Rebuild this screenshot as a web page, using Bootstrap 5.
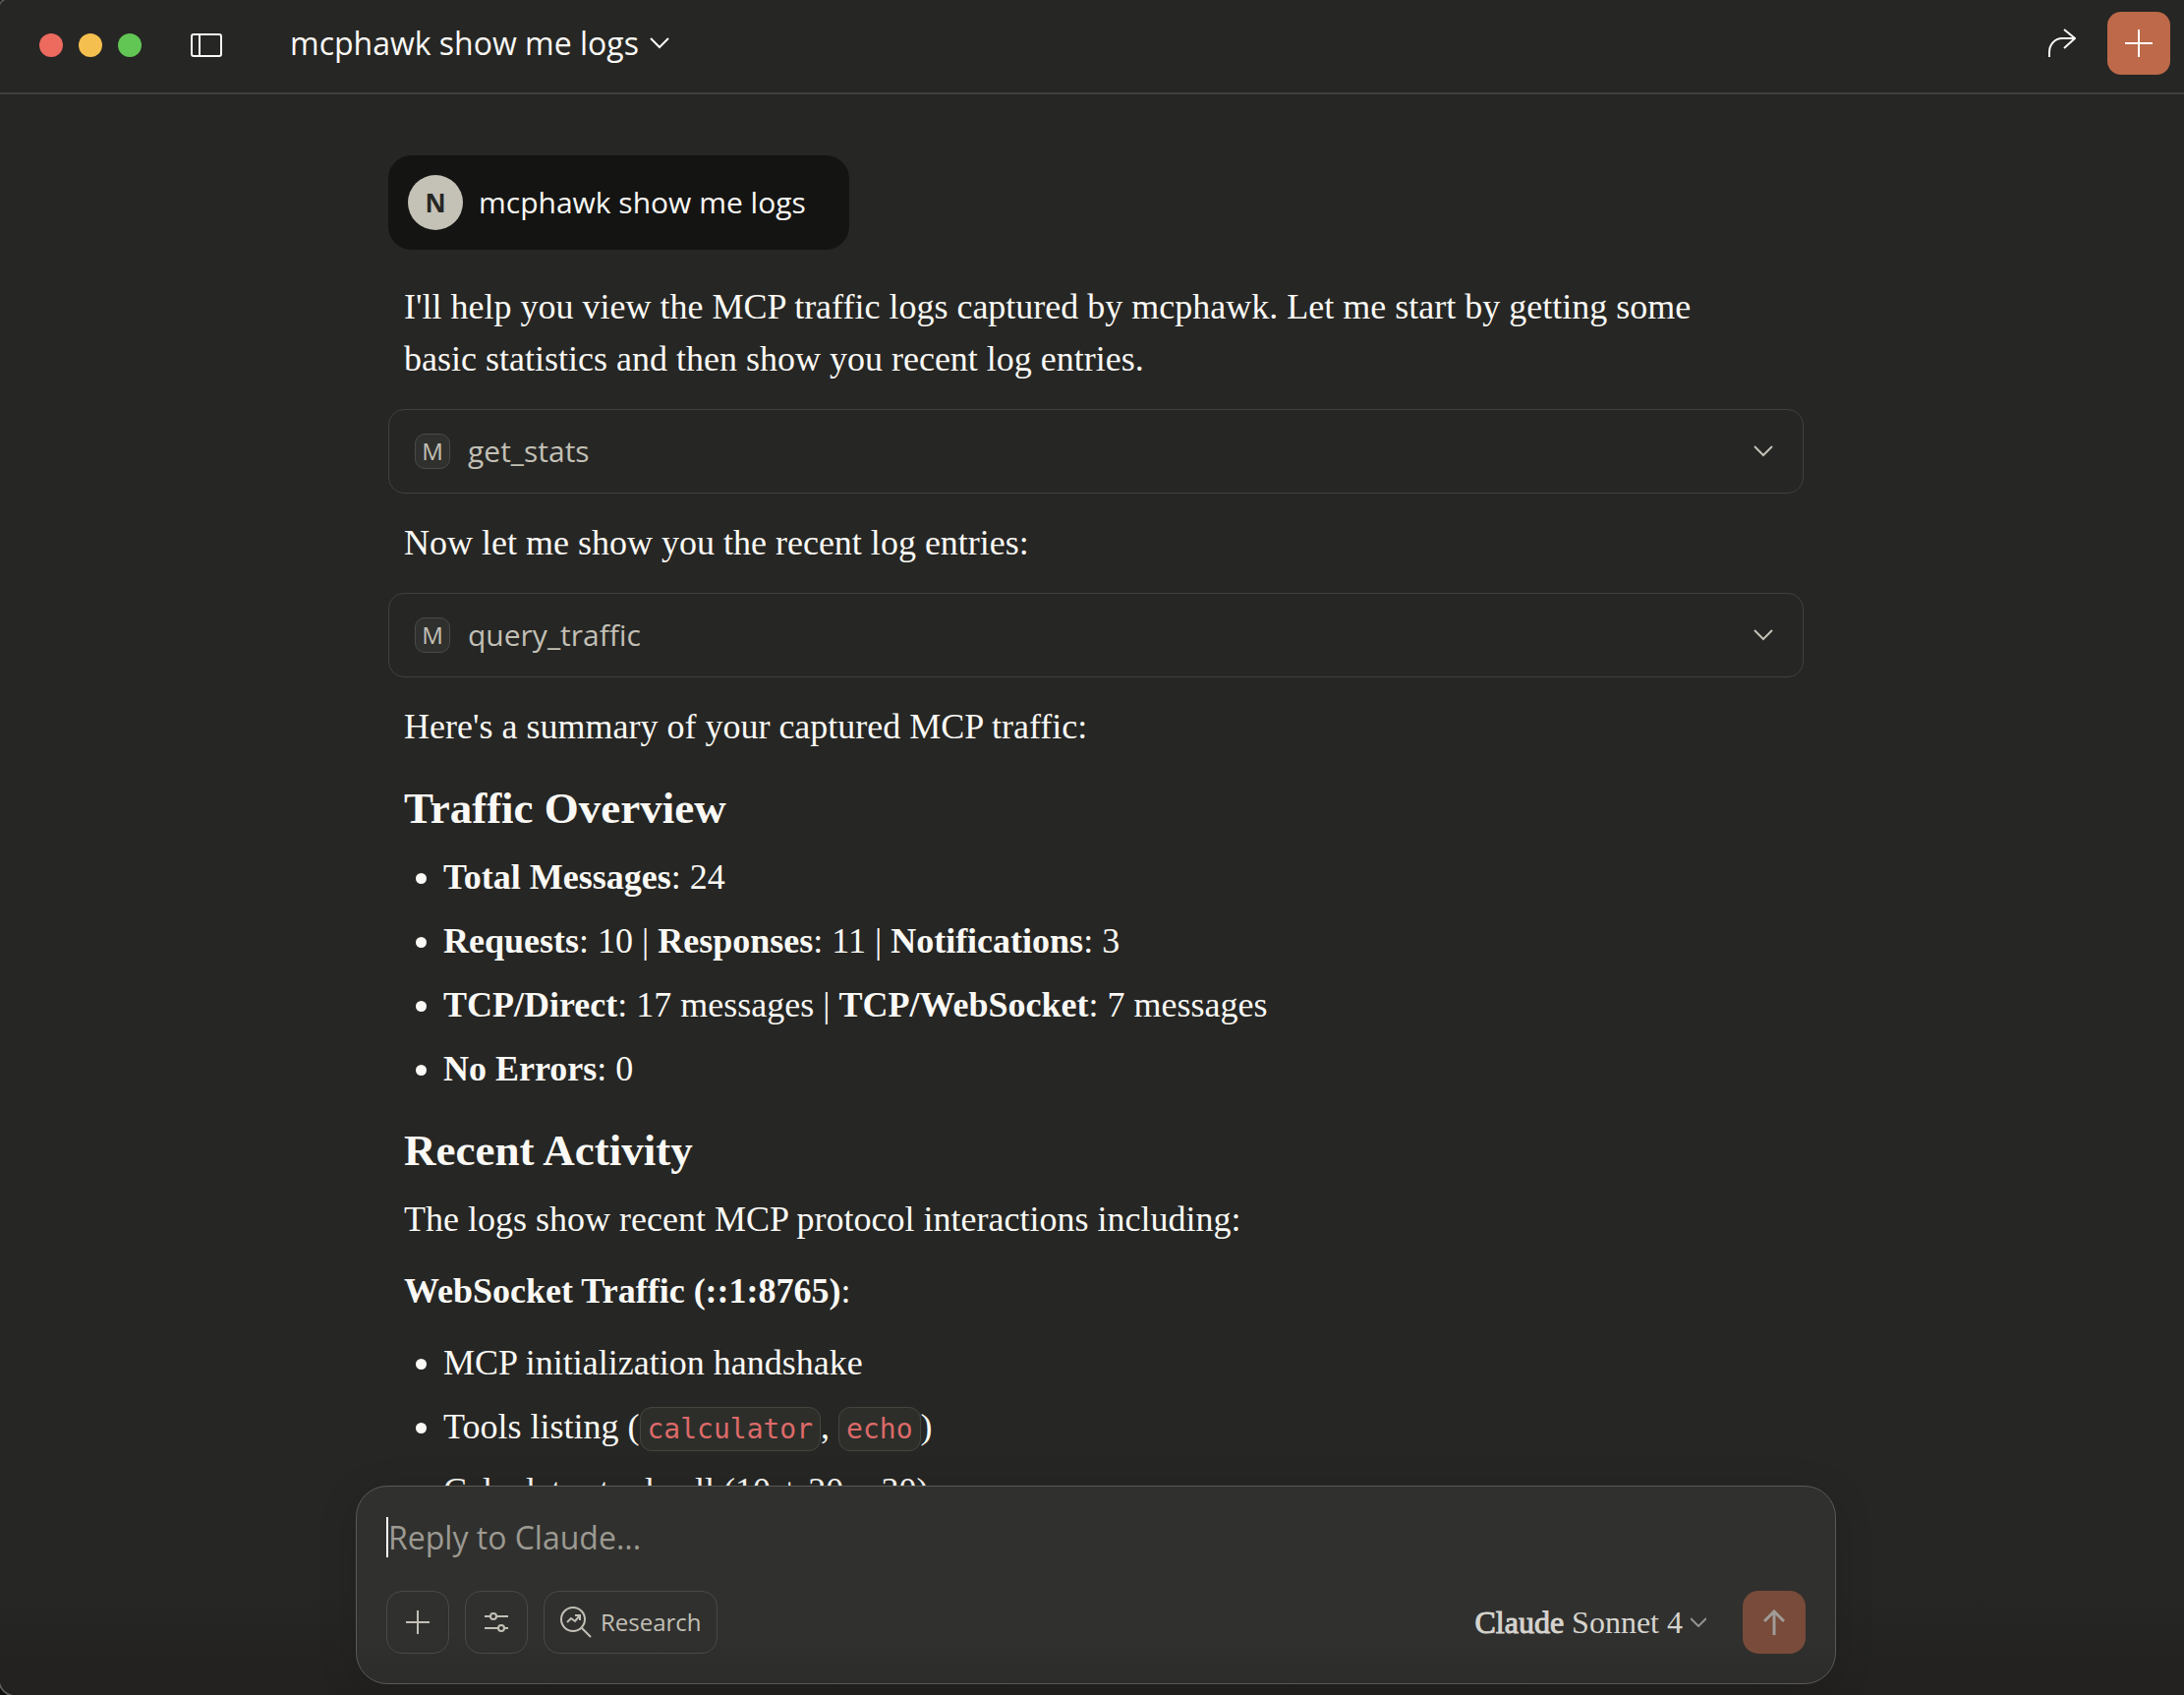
<!DOCTYPE html>
<html lang="en">
<head>
<meta charset="utf-8">
<meta name="viewport" content="width=device-width, initial-scale=1">
<title>mcphawk show me logs</title>
<link href="https://cdn.jsdelivr.net/npm/bootstrap@5.3.0/dist/css/bootstrap.min.css" rel="stylesheet">
<style>
  :root {
    --ink: #faf9f5;
    --ink-soft: #c2c0b6;
    --ink-dim: #9c9a92;
    --line: #40403d;
    --sans: "Open Sans", "Noto Sans", sans-serif;
    --serif: "Liberation Serif", serif;
  }
  body { background: #0d0f0d; color: var(--ink); font-family: var(--sans); }
  svg { display: block; fill: none; stroke: currentColor; stroke-width: 2; }
  .app-window {
    background: linear-gradient(#262624 94%, #222120);
    border-radius: 8px 0 0 16px;
    box-shadow: 0 0 0 2px #5a5a58;
  }
  .title-bar { border-bottom: 2px solid #40403e; padding: 12px 14px 18px 40px; }
  .window-controls { padding-top: 4px; gap: 16px; }
  .light { width: 24px; height: 24px; border-radius: 50%; }
  .light-close { background: #ed6a5f; }
  .light-min { background: #f5bf4f; }
  .light-max { background: #62c655; }
  .sidebar-toggle { margin-left: 34px; color: var(--ink-soft); }
  .plain-btn { background: none; border: 0; padding: 0; color: inherit; }
  .chat-title { margin-left: 69px; font-size: 32px; line-height: 44px; gap: 11px; }
  .square-btn { width: 64px; height: 64px; border: 0; border-radius: 14px; padding: 0; color: #fff; }
  .new-btn { background: #bd694a; }
  .send-btn { background: #784b3a; color: #a09c97; border-radius: 16px; }
  .send-btn svg { stroke-width: 3; }

  .thread { min-height: 0; padding: 62px 0 0 8px; }
  .thread-column { max-width: 1440px; }
  .user-bubble { background: #141413; border-radius: 24px; padding: 20px 44px 20px 20px; gap: 16px; font-size: 30px; line-height: 56px; }
  .avatar { width: 56px; height: 56px; background: #c4c1b7; color: #262624; font-size: 26px; font-weight: 700; }
  .reply { font-family: var(--serif); font-size: 36px; line-height: 53px; padding-top: 32px; }
  .reply p, .reply ul, .reply h3 { margin: 0 16px; }
  .reply h3 { font-size: 45px; line-height: 56px; font-weight: 700; margin-top: 28px; margin-bottom: 16px; }
  .reply p + p, .reply p + ul { margin-top: 20px; }
  .reply ul { padding-left: 40px; }
  .reply li + li { margin-top: 12px; }
  .reply code {
    font: 28px/42px "DejaVu Sans Mono", monospace; color: #dd6a69; background: #2d2e2a;
    border: 1px solid #45453f; border-radius: 12px; padding: 5px 7px;
  }
  .tool-call {
    border: 1px solid var(--line); border-radius: 16px; height: 86px; padding: 0 30px 0 26px;
    margin: 24px 0; gap: 18px; font-family: var(--sans); font-size: 30px; line-height: 40px; color: var(--ink-soft);
  }
  .tool-badge { width: 36px; height: 36px; border: 1px solid #4a4a47; border-radius: 10px; background: #30302e; font-size: 24px; line-height: 34px; }

  .composer-dock { padding: 0 0 11px 8px; }
  .composer {
    max-width: 1506px; background: linear-gradient(#30302e 75%, #2c2c2a); border: 1px solid #5a5955; border-radius: 32px;
    padding: 31px 30px 30px; box-shadow: 0 8px 40px rgba(0, 0, 0, .14);
  }
  .reply-box {
    background: none; border: 0; border-left: 2px solid #fff; border-radius: 0; outline: 0; padding: 0; height: 41px;
    font-size: 32px; line-height: 41px; color: var(--ink);
  }
  .reply-box::placeholder { color: var(--ink-dim); opacity: 1; }
  .composer-tools { margin-top: 34px; gap: 16px; }
  .tool-btn { height: 64px; min-width: 64px; background: none; border: 1px solid #494946; border-radius: 16px; padding: 0; color: var(--ink-soft); font-size: 24px; }
  .research-btn { padding: 0 15px; gap: 8px; }
  .model-btn { font-family: var(--serif); font-size: 32px; gap: 8px; color: #d6d4ce; margin-right: 21px; }
  .model-brand { -webkit-text-stroke: 1px currentColor; }
</style>
</head>
<body>
<div class="app-window vh-100 d-flex flex-column overflow-hidden">
  <header class="title-bar d-flex align-items-center flex-shrink-0">
    <div class="window-controls d-flex align-items-center">
      <span class="light light-close"></span>
      <span class="light light-min"></span>
      <span class="light light-max"></span>
      <button class="plain-btn sidebar-toggle" type="button" aria-label="Toggle sidebar">
        <svg width="32" height="24" viewBox="0 0 32 24"><rect x="1" y="1" width="30" height="22" rx="2"/><path d="M9 1v22"/></svg>
      </button>
    </div>
    <button class="plain-btn chat-title d-flex align-items-center" type="button">
      mcphawk show me logs
      <svg width="20" height="12" viewBox="0 0 20 12"><path d="M1 1l9 9 9-9"/></svg>
    </button>
    <button class="plain-btn ms-auto me-4 pe-2" type="button" aria-label="Share">
      <svg width="30" height="30" viewBox="0 0 30 30"><path d="M3 29v-5C3 17 8 10 16 10h13M18 1l11 9-11 10"/></svg>
    </button>
    <button class="square-btn new-btn d-flex align-items-center justify-content-center" type="button" aria-label="New chat">
      <svg width="28" height="28" viewBox="0 0 28 28"><path d="M14 0v28M0 14h28"/></svg>
    </button>
  </header>

  <main class="thread flex-grow-1 overflow-hidden">
    <div class="thread-column mx-auto">
      <div class="user-bubble d-inline-flex align-items-center">
        <span class="avatar rounded-circle d-flex align-items-center justify-content-center">N</span>
        <span>mcphawk show me logs</span>
      </div>
      <div class="reply">
        <p>I'll help you view the MCP traffic logs captured by mcphawk. Let me start by getting some<br>basic statistics and then show you recent log entries.</p>
        <button class="plain-btn tool-call w-100 d-flex align-items-center" type="button">
          <span class="tool-badge text-center">M</span>
          <span>get_stats</span>
          <svg class="ms-auto" width="20" height="12" viewBox="0 0 20 12"><path d="M1 1l9 9 9-9"/></svg>
        </button>
        <p>Now let me show you the recent log entries:</p>
        <button class="plain-btn tool-call w-100 d-flex align-items-center" type="button">
          <span class="tool-badge text-center">M</span>
          <span>query_traffic</span>
          <svg class="ms-auto" width="20" height="12" viewBox="0 0 20 12"><path d="M1 1l9 9 9-9"/></svg>
        </button>
        <p>Here's a summary of your captured MCP traffic:</p>
        <h3>Traffic Overview</h3>
        <ul>
          <li><strong>Total Messages</strong>: 24</li>
          <li><strong>Requests</strong>: 10 | <strong>Responses</strong>: 11 | <strong>Notifications</strong>: 3</li>
          <li><strong>TCP/Direct</strong>: 17 messages | <strong>TCP/WebSocket</strong>: 7 messages</li>
          <li><strong>No Errors</strong>: 0</li>
        </ul>
        <h3>Recent Activity</h3>
        <p>The logs show recent MCP protocol interactions including:</p>
        <p><strong>WebSocket Traffic (::1:8765)</strong>:</p>
        <ul>
          <li>MCP initialization handshake</li>
          <li>Tools listing (<code>calculator</code>, <code>echo</code>)</li>
          <li>Calculator tool call (10 + 20 = 30)</li>
        </ul>
      </div>
    </div>
  </main>

  <footer class="composer-dock flex-shrink-0">
    <form class="composer mx-auto">
      <input class="reply-box d-block w-100" type="text" placeholder="Reply to Claude..." aria-label="Reply to Claude">
      <div class="composer-tools d-flex align-items-center">
        <button class="tool-btn d-flex align-items-center justify-content-center" type="button" aria-label="Add content">
          <svg width="24" height="24" viewBox="0 0 24 24"><path d="M12 0v24M0 12h24"/></svg>
        </button>
        <button class="tool-btn d-flex align-items-center justify-content-center" type="button" aria-label="Tools">
          <svg width="24" height="22" viewBox="0 0 24 22"><path d="M0 5h6M12 5h12M0 17h14M20 17h4"/><circle cx="9" cy="5" r="3"/><circle cx="17" cy="17" r="3"/></svg>
        </button>
        <button class="tool-btn research-btn d-flex align-items-center" type="button">
          <svg width="34" height="34" viewBox="0 0 34 34"><circle cx="14" cy="14" r="12"/><path d="M23 23l9 9M8 17l4-4 4 3 5-6M16 10h5v5"/></svg>
          Research
        </button>
        <button class="plain-btn model-btn ms-auto d-flex align-items-center" type="button">
          <span><span class="model-brand">Claude</span> Sonnet 4</span>
          <svg width="16" height="10" viewBox="0 0 16 10" stroke-opacity=".6"><path d="M0 1l8 8 8-8"/></svg>
        </button>
        <button class="square-btn send-btn d-flex align-items-center justify-content-center" type="submit" aria-label="Send message">
          <svg width="22" height="26" viewBox="0 0 22 26"><path d="M11 26V2M1 12L11 2l10 10"/></svg>
        </button>
      </div>
    </form>
  </footer>
</div>
<script src="https://cdn.jsdelivr.net/npm/bootstrap@5.3.0/dist/js/bootstrap.bundle.min.js"></script>
</body>
</html>
